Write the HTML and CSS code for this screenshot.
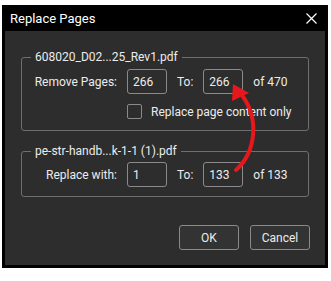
FILE: index.html
```html
<!DOCTYPE html>
<html lang="en">
<head>
    <meta charset="UTF-8">
    <title>Replace Pages</title>
    <link rel="stylesheet" href="styles.css">
</head>
<body>
    <div class="dialog">
        <div class="titlebar">
            <span class="title">Replace Pages</span>
            <svg class="close" width="11" height="11" viewBox="0 0 11 11">
                <path d="M0.5 0.5 L10.5 10.5 M10.5 0.5 L0.5 10.5" stroke="#fff" stroke-width="1.2" fill="none"/>
            </svg>
        </div>
        <div class="content">
            <fieldset class="group first">
                <legend>608020_D02...25_Rev1.pdf</legend>
                <div class="row">
                    <label class="label">Remove Pages:</label>
                    <input type="text" class="num" value="266">
                    <span class="to">To:</span>
                    <input type="text" class="num" value="266">
                    <span class="of">of 470</span>
                </div>
                <div class="check-row">
                    <input type="checkbox" class="check" id="onlyContent">
                    <label for="onlyContent">Replace page content only</label>
                </div>
            </fieldset>
            <fieldset class="group second">
                <legend>pe-str-handb...k-1-1 (1).pdf</legend>
                <div class="row">
                    <label class="label">Replace with:</label>
                    <input type="text" class="num" value="1">
                    <span class="to">To:</span>
                    <input type="text" class="num" value="133">
                    <span class="of">of 133</span>
                </div>
            </fieldset>
            <div class="buttons">
                <button>OK</button>
                <button>Cancel</button>
            </div>
        </div>
    </div>

    <!-- annotation drawn over the dialog -->
    <svg class="arrow" width="331" height="281" viewBox="0 0 331 281">
        <path d="M236 170 C256 152, 260 118, 241 94" stroke="#e5181c" stroke-width="4" fill="none" stroke-linecap="round"/>
        <polygon points="233,84 249,93 232,101" fill="#e5181c"/>
    </svg>
</body>
</html>
```

FILE: styles.css
```css
body {
    margin: 0;
    background: #fff;
    font-family: Roboto, "Liberation Sans", sans-serif;
    font-size: 12px;
    color: #ececec;
}
.dialog {
    margin: 5px 0 0 2px;
    width: 320px;
    border: 3px solid #000;
    border-top: none;
}
.titlebar {
    height: 26px;
    background: #000;
    display: flex;
    align-items: center;
    justify-content: space-between;
    padding: 0 8px 0 5px;
}
.title {
    font-size: 13px;
    color: #fff;
}
.content {
    height: 234px;
    background: #2d2d2d;
    padding: 19px 16px 0 16px;
    box-sizing: border-box;
}
.group {
    margin: 0;
    padding: 0;
    border: 1px solid #6f6f6f;
    border-radius: 3px;
}
.group legend {
    margin-left: 9px;
    padding: 0 4px;
    line-height: 14px;
}
.first {
    padding: 5px 0 11px 0;
}
.second {
    margin-top: 13px;
    padding: 4px 0 9px 0;
}
.row {
    display: flex;
    align-items: center;
    height: 25px;
}
.label {
    width: 95px;
    text-align: right;
    margin-right: 10px;
}
.num {
    width: 40px;
    height: 25px;
    box-sizing: border-box;
    padding: 0 5px;
    background: transparent;
    border: 1px solid #8a8a8a;
    border-radius: 3px;
    color: #ececec;
    font-family: Roboto, "Liberation Sans", sans-serif;
    font-size: 12px;
}
.to {
    margin: 0 10px;
}
.of {
    margin-left: 10px;
}
.check-row {
    display: flex;
    align-items: center;
    margin: 10px 0 0 105px;
    height: 15px;
}
.check {
    appearance: none;
    width: 15px;
    height: 15px;
    margin: 0 9px 0 0;
    border: 1px solid #8a8a8a;
    border-radius: 2px;
    background: transparent;
}
.buttons {
    display: flex;
    justify-content: flex-end;
    gap: 11px;
    margin: 28px -1px 0 0;
}
button {
    width: 60px;
    height: 25px;
    background: #333;
    border: 1px solid #8a8a8a;
    border-radius: 3px;
    color: #ececec;
    font-family: Roboto, "Liberation Sans", sans-serif;
    font-size: 12px;
}
.arrow {
    position: absolute;
    top: 0;
    left: 0;
    pointer-events: none;
}
```
